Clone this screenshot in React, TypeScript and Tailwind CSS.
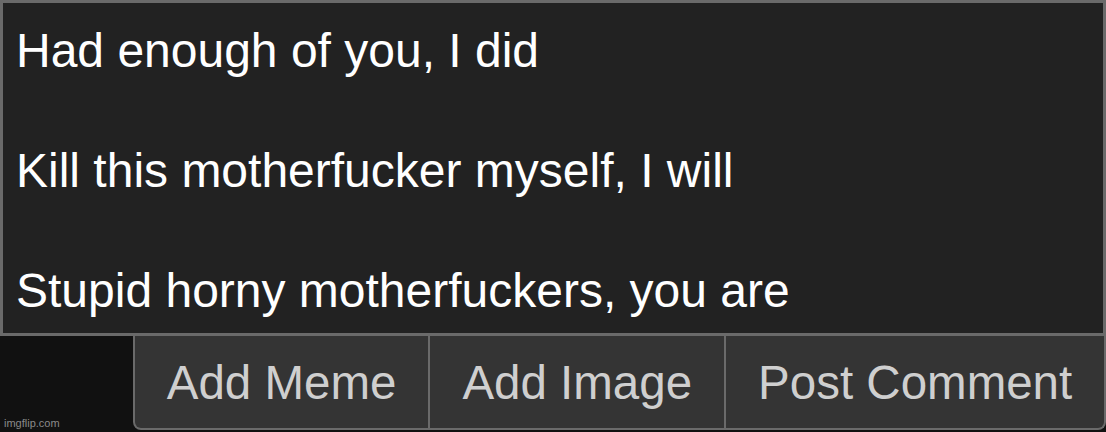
import React from 'react';

// Comment box: a dark text area with the post's lines, and a row of action buttons under it.
const LINES = ['Had enough of you, I did', '', 'Kill this motherfucker myself, I will', '', 'Stupid horny motherfuckers, you are'];

const BUTTONS = [
  { label: 'Add Meme', w: 'w-[295px]' },
  { label: 'Add Image', w: 'w-[296px]' },
  { label: 'Post Comment', w: 'w-[380px]' },
];

export default function App() {
  return (
    <div className="relative flex h-[432px] w-[1106px] flex-col bg-[#111111] font-['Liberation_Sans',Arial,sans-serif]">
      <div className="h-[336px] border-[3px] border-[#6a6a6a] bg-[#222222] pl-[13px] pt-[18px] text-[48px] leading-[60px] text-white">
        {LINES.map((line, i) => (
          <div key={i} className="h-[60px] whitespace-pre">
            {line}
          </div>
        ))}
      </div>
      <div className="flex pl-[133px]">
        <div className="flex h-[94px] overflow-hidden rounded-b-[8px] border-x-2 border-b-2 border-[#6a6a6a] bg-[#6a6a6a]">
          {BUTTONS.map((b, i) => (
            <button
              key={b.label}
              type="button"
              className={`${b.w} ${i > 0 ? 'ml-[2px]' : ''} flex items-center justify-center bg-[#343434] pt-[2px] text-[47.5px] text-[#cfcfcf]`}
            >
              {b.label}
            </button>
          ))}
        </div>
      </div>
      <span className="absolute bottom-[3px] left-[4px] text-[11px] leading-none text-[#8a8a8a]">imgflip.com</span>
    </div>
  );
}
